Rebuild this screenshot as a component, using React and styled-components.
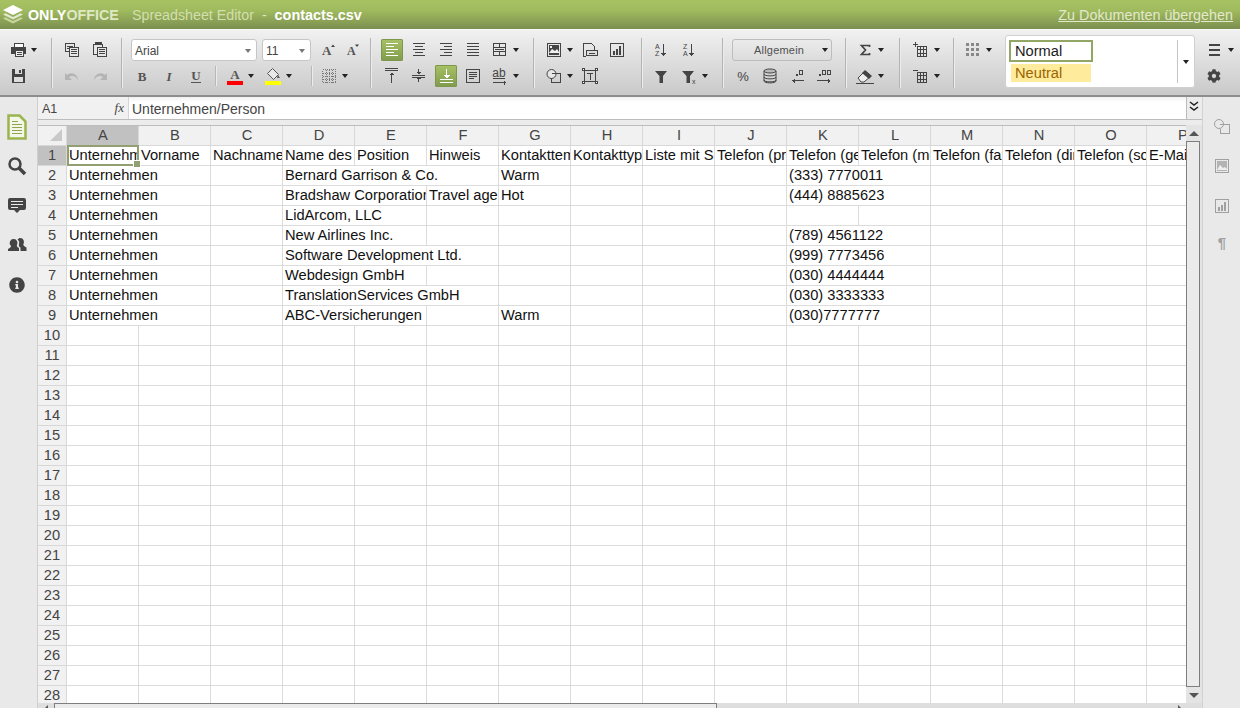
import React from "react";
import styled, { createGlobalStyle } from "styled-components";
import { FaCog, FaInfoCircle } from "react-icons/fa";

const Global = createGlobalStyle`
  html, body { margin: 0; padding: 0; background: #fff; }
  body { font-family: "Liberation Sans", Arial, sans-serif; overflow: hidden; }
  * { box-sizing: border-box; }
`;

const Page = styled.div`
  width: 1240px; height: 708px; overflow: hidden;
  display: flex; flex-direction: column;
`;
const Header = styled.header`
  height: 29px; flex: none; display: flex; align-items: center;
  padding: 0 7px 0 3px; color: #fff;
  background: linear-gradient(#a6c262, #a0bb5e 35%, #7c8f50);
`;
const LogoText = styled.span`
  font-size: 14.3px; font-weight: 700; margin-left: 5px; width: 104px; color: #dfe8c4;
  b { color: #fff; }
`;
const AppName = styled.span`
  font-size: 14.25px; color: #d3dfae;
  &::after { content: "  -  "; white-space: pre; color: #dfe8c4; }
`;
const FileName = styled.span`font-size: 14.4px; font-weight: 700; color: #fff;`;
const DocLink = styled.a`
  margin-left: auto; font-size: 14.35px; color: #e2e9cb; text-decoration: underline;
`;

const Toolbar = styled.div`
  height: 68px; flex: none; display: flex; align-items: flex-start; padding-top: 9px;
  background: linear-gradient(#f1f1f1, #c9c9c9);
  border-top: 1px solid #fafafa; border-bottom: 2px solid #8d8d8d;
`;
const Group = styled.div`
  width: ${p => p.$w}px; padding-left: ${p => p.$pad}px; flex: none;
  display: flex; flex-direction: column; gap: 4px;
`;
const GroupSep = styled.div`
  width: 1px; height: 50px; flex: none; background: #b4b4b4; box-shadow: 1px 0 0 #ececec; margin-top: -1px;
`;
const ToolRow = styled.div`
  display: flex; align-items: center; gap: ${p => p.$gap ?? 5}px; height: 22px;
`;
const RowSep = styled.div`
  width: 1px; height: 20px; background: #b8b8b8; box-shadow: 1px 0 0 #ececec;
  margin: 0 ${p => p.$r}px 0 ${p => p.$l}px;
`;
const ToolButton = styled.div`
  width: ${p => p.$w}px; height: 22px; flex: none; display: flex; align-items: center; border-radius: 2px;
  color: #444;
  ${p => p.$active ? "background: linear-gradient(#a8c266, #7f9a4c); box-shadow: inset 0 0 0 1px #7d974b; color: #fff;" : ""}
`;
const GearSlot = styled.span`
  display: flex; width: 22px; justify-content: center; padding-right: 2px;
`;
const Caret = styled.i`
  display: block; width: 0; height: 0; margin-left: 2px; flex: none;
  border-left: 3.5px solid transparent; border-right: 3.5px solid transparent;
  border-top: 4px solid ${p => p.$color || "#222"};
`;
const Svg = styled.svg`
  flex: none; display: block; fill: none; stroke: currentColor;
`;
const LogoMark = styled(Svg)`stroke: none;`;
const IconText = styled.text`
  font-family: ${p => (p.$serif ? '"Liberation Serif"' : '"Liberation Sans"')}, serif;
  font-size: ${p => p.$size}px; font-weight: ${p => (p.$bold ? 700 : 400)};
  font-style: ${p => (p.$italic ? "italic" : "normal")};
  fill: ${p => p.$fill || "currentColor"}; stroke: none;
`;
const Combo = styled.div`
  width: ${p => p.$w}px; height: 22px; flex: none; display: flex; align-items: center; justify-content: space-between;
  padding: 1px 5px 0 3px; background: #fff; border: 1px solid #c6c6c6; border-radius: 3px;
  font-size: 12px; color: #444;
`;
const FormatCombo = styled.div`
  width: 100px; height: 22px; flex: none; display: flex; align-items: center; padding: 0 3px 0 21px;
  justify-content: space-between; border: 1px solid #bdbdbd; border-radius: 3px;
  background: linear-gradient(#ebebeb, #dcdcdc);
  font-size: 11px; letter-spacing: .2px; color: #505050;
`;
const Gallery = styled.div`
  width: 190px; height: 53px; margin-top: -4px; flex: none; display: flex; background: #fff;
  border: 1px solid #d0d0d0; border-radius: 3px;
`;
const StyleList = styled.div`
  flex: 1; padding: 4px 0 0 3px; display: flex; flex-direction: column; gap: 2px;
`;
const StyleNormal = styled.div`
  width: 84px; height: 22px; border: 2px solid #93a665; padding-left: 4px;
  font-size: 14.67px; line-height: 18px; color: #1c1c1c;
`;
const StyleNeutral = styled.div`
  width: 80px; height: 18px; margin-left: 2px; background: #ffeb9c; padding-left: 4px;
  font-size: 14.67px; line-height: 18px; color: #9c6500;
`;
const GalleryEdge = styled.div`
  width: 17px; margin: 4px 0; flex: none; border-left: 1px solid #c4c4c4;
  display: flex; align-items: center; justify-content: center; padding-right: 2px;
`;

const Workspace = styled.div`flex: 1; display: flex; min-height: 0;`;
const SideBar = styled.aside`
  width: ${p => p.$w}px; flex: none; background: #e9e9e9; padding-top: 10px;
  ${p => (p.$right ? "border-left: 1px solid #d2d2d2;" : "border-right: 1px solid #cfcfcf;")}
  color: ${p => (p.$right ? "#a0a0a0" : "#444")};
`;
const SideItem = styled.div`
  height: 39.5px; display: flex; align-items: center; justify-content: center;
  padding-left: ${p => (p.$right ? 1 : 0)}px; padding-right: ${p => (p.$right ? 0 : 3)}px;
`;
const Main = styled.main`flex: 1; min-width: 0; display: flex; flex-direction: column;`;
const FormulaBar = styled.div`
  height: 23px; flex: none; display: flex; border-bottom: 1px solid #bcbcbc;
`;
const NameBox = styled.div`
  width: 90px; flex: none; display: flex; align-items: center; justify-content: space-between;
  padding: 2px 4px 0 4px; background: #f1f1f1; font-size: 12.5px; color: #444;
`;
const FxLabel = styled.span`
  font-family: "Liberation Serif", serif; font-style: italic; font-size: 13px; color: #444; margin-top: -2px;
`;
const FormulaInput = styled.div`
  flex: 1; padding-left: 3px; font-size: 14px; line-height: 24px; color: #444;
  background: linear-gradient(#f0f0f0, #fff 5px); border-left: 1px solid #d5d5d5;
`;
const ExpandButton = styled.div`
  width: 16px; flex: none; background: #ececec; border-left: 1px solid #bcbcbc;
  display: flex; justify-content: center; padding: 4px 2px 0 0; color: #222;
`;
const Strip = styled.div`height: 5px; flex: none; background: #ececec;`;
const SheetArea = styled.div`flex: 1; min-height: 0; display: flex;`;
const Sheet = styled.div`flex: 1; min-width: 0; overflow: hidden; position: relative; background: #fff;`;
const Row = styled.div`
  display: grid; grid-template-columns: 29px repeat(16, 72px); width: 1181px; height: 20px;
`;
const HeaderRow = styled(Row)`height: 21px; border-top: 1px solid #bdbdbd;`;
const Corner = styled.div`
  background: #f1f1f1; border-right: 1px solid #d8d8d8; border-bottom: 1px solid #d8d8d8;
  display: flex; align-items: flex-end; justify-content: flex-end; padding: 0 3px 3px 0;
`;
const HeadCell = styled.div`
  background: ${p => (p.$selected ? "#c1c1c1" : "#f1f1f1")};
  border-right: 1px solid #d8d8d8; border-bottom: 1px solid #d8d8d8;
  font-size: 14.67px; color: #444; text-align: center; line-height: 19px;
`;
const ColHead = styled(HeadCell)`padding-left: 1px;`;
const Cell = styled.div`
  grid-column: span ${p => p.$span};
  border-right: 1px solid #dcdcdc; border-bottom: 1px solid #dcdcdc;
  padding-left: 2px; font-size: 14.67px; line-height: 19px; color: #111;
  white-space: nowrap; overflow: hidden;
`;
const Selection = styled.div`
  position: absolute; left: 29px; top: 20px; width: 72px; height: 21px;
  border: 2px solid #929f70; pointer-events: none;
  &::after {
    content: ""; position: absolute; right: -4px; bottom: -4px; width: 6px; height: 6px;
    background: #929f70; border: 1px solid #fff;
  }
`;
const VScroll = styled.div`
  width: 16px; flex: none; display: flex; flex-direction: column; align-items: stretch; background: #e4e4e4;
`;
const ArrowCell = styled.div`
  height: ${p => p.$h}px; flex: none; display: flex; align-items: center; justify-content: center; padding-right: 1px;
`;
const UpTri = styled.i`
  width: 0; height: 0; border-left: 5px solid transparent; border-right: 5px solid transparent;
  border-bottom: 5px solid #555;
`;
const DownTri = styled(UpTri)`border-bottom: 0; border-top: 5px solid #555;`;
const VThumb = styled.div`
  flex: 1; width: 14px; border: 1px solid #7e7e7e; background: #ebebeb;
`;
const HScroll = styled.div`
  height: 5px; flex: none; display: flex; background: #dedede;
`;
const HArrow = styled.div`
  width: ${p => p.$w}px; flex: none; display: flex; justify-content: flex-end; padding: 2px ${p => p.$inset}px 0 0;
`;
const Tip = styled.i`
  width: 0; height: 0; border-top: 3px solid transparent; border-bottom: 3px solid transparent;
  ${p => (p.$flip ? "border-left: 3px solid #555;" : "border-right: 3px solid #555;")}
`;
const HThumb = styled.div`
  width: 663px; flex: none; border: 1px solid #7e7e7e; border-bottom: 0; background: #ebebeb;
`;

const G = ({ children, w = 22, h = 22 }) => (
  <Svg width={w} height={h} viewBox={`0 0 ${w} ${h}`}>{children}</Svg>
);
const C = { shapeRendering: "crispEdges" };
const lines = (rows) => <path style={C} d={rows.map(([x, y, l]) => `M${x} ${y + 0.5}h${l}`).join("")} />;

const icons = {
  print: <G><g style={C}><path fill="#fff" d="M7.5 4.5h9v4h-9z" /><path fill="currentColor" d="M4 8h15v7H4z" stroke="none" /><path fill="#eee" d="M8.5 11.5h8v6h-8z" /><path d="M10 13.5h5M10 15.5h5" /></g></G>,
  save: <G><g style={C}><path fill="currentColor" stroke="none" d="M5 4h12l1 1v13H5z" /><path fill="#ddd" stroke="none" d="M8 4h7v5H8zM7 12h9v5H7z" /><path fill="currentColor" stroke="none" d="M12 5h2v3h-2z" /></g></G>,
  copy: <G><g style={C}><path d="M4.5 4.5h9v8h-9z" fill="#e6e6e6" /><path d="M6 7.5h6M6 9.5h6" /><path d="M8.5 8.5h9v9h-9z" fill="#e6e6e6" /><path d="M10 10.5h6M10 12.5h6M10 14.5h6" /></g></G>,
  paste: <G><g style={C}><path d="M4.5 5.5h9v10h-9z" fill="#e6e6e6" /><path fill="currentColor" stroke="none" d="M6 3h7v3H6z" /><path d="M8.5 8.5h9v9h-9z" fill="#e6e6e6" /><path d="M10 10.5h6M10 12.5h6M10 14.5h6" /></g></G>,
  undo: <G><path fill="#b4b4b4" stroke="none" d="M4 8v7h7l-3-3c3-2 7-1 9 3 0-5-6-9-11-5z" /></G>,
  redo: <G><path fill="#b4b4b4" stroke="none" d="M18 8v7h-7l3-3c-3-2-7-1-9 3 0-5 6-9 11-5z" /></G>,
  grow: <G><IconText x="6" y="16" $serif $bold $size={13} $fill="#555">A</IconText><path fill="currentColor" stroke="none" d="M15 8l2-2.500 2 2.500z" /></G>,
  shrink: <G><IconText x="4" y="16" $serif $bold $size={12} $fill="#555">A</IconText><path fill="currentColor" stroke="none" d="M12 5.500h4l-2 2.500z" /></G>,
  bold: <G><IconText x="11" y="16" textAnchor="middle" $serif $bold $size={13} $fill="#555">B</IconText></G>,
  italic: <G><IconText x="11" y="16" textAnchor="middle" $serif $bold $italic $size={13} $fill="#555">I</IconText></G>,
  underline: <G><IconText x="11" y="15" textAnchor="middle" $serif $bold $size={13} $fill="#555">U</IconText><path style={C} stroke="#555" d="M6 17.500h10" /></G>,
  fontColor: <G><IconText x="11" y="14" textAnchor="middle" $serif $bold $size={13} $fill="#555">A</IconText><path style={C} fill="#f00" stroke="none" d="M3 16h16v4H3z" /></G>,
  fillColor: <G><path stroke="#555" d="M10.500 3.500l6 6-5 5-6-6z" fill="#e8e8e8" /><path fill="#555" stroke="none" d="M16 10l2 3h-3z" /><path style={C} fill="#ff0" stroke="none" d="M3 16h16v4H3z" /></G>,
  borders: <G><path style={C} stroke="#777" strokeDasharray="1 1" d="M4.500 4.500h13v13h-13zM11 4.500v13M4.500 11h13M8 4.500v13M14 4.500v13M4.500 8h13M4.500 14h13" /></G>,
  alignL: <G>{lines([[5, 4, 12], [5, 7, 8], [5, 10, 12], [5, 13, 8], [5, 16, 12]])}</G>,
  alignC: <G>{lines([[5, 4, 12], [7, 7, 8], [5, 10, 12], [7, 13, 8], [5, 16, 12]])}</G>,
  alignR: <G>{lines([[5, 4, 12], [9, 7, 8], [5, 10, 12], [9, 13, 8], [5, 16, 12]])}</G>,
  alignJ: <G>{lines([[5, 4, 12], [5, 7, 12], [5, 10, 12], [5, 13, 12], [5, 16, 12]])}</G>,
  merge: <G><g style={C}><path d="M4.500 4.500h12v12h-12zM4.500 8.500h12M4.500 12.500h12M10.500 4.500v4M10.500 12.500v4" /><path d="M6 10.500h9" /></g></G>,
  vTop: <G>{lines([[4, 3, 13], [4, 5, 13]])}<path style={C} d="M10.500 18V8M8.500 9.500h4M9.500 8.500h2" /></G>,
  vMid: <G>{lines([[4, 10, 13]])}<path style={C} d="M10.500 4v4M10.500 13v4M8.500 7.500h4M9.500 8.500h2M8.500 13.500h4M9.500 12.500h2M4 12.500h13" /></G>,
  vBot: <G><path style={C} d="M11.500 4v8M8.500 10.500h6M9.500 11.500h4M10.500 12.500h2M5 14.500h13M5 17.500h13" /></G>,
  wrap: <G><path style={C} d="M4.500 4.500h13v13h-13z" />{lines([[7, 7, 8], [7, 9, 8], [7, 11, 8], [7, 13, 5]])}</G>,
  orient: <G><IconText x="10" y="12" textAnchor="middle" $size={12}>ab</IconText><path style={C} d="M4 13.500h12M4 17.500h13M15.500 15.500v4" /></G>,
  image: <G><g style={C}><path d="M4.500 4.500h13v13h-13z" /><path fill="currentColor" stroke="none" d="M6 6h10v10H6z" /></g><path fill="#eee" stroke="none" d="M6 14l3-4 3 2 2-2 2 3v1H6z" /><path fill="#eee" stroke="none" d="M7 7h2v2H7z" /></G>,
  link: <G><path style={C} d="M4.500 17.500V4.500h8l3 3v3M4.500 17.500h2" /><path style={C} d="M7.500 11.500h11v5h-11z" fill="#ddd" /><path style={C} d="M10 14h6" /></G>,
  chart: <G><g style={C}><path d="M4.500 4.500h13v13h-13z" /><path d="M7.500 12.500h1v3h-1zM10.500 10.500h1v5h-1zM13.500 7.500h1v8h-1z" /></g></G>,
  shape: <G><circle cx="8.500" cy="9" r="4.500" fill="#e6e6e6" /><path style={C} d="M8.500 8.500h9v9h-9V13" /></G>,
  textbox: <G><g style={C}><path d="M5.500 5.500h11v11h-11z" /><path fill="#fff" d="M3.500 3.500h2v2h-2zM16.500 3.500h2v2h-2zM3.500 16.500h2v2h-2zM16.500 16.500h2v2h-2z" /><path d="M8 8.500h6M11 8.500v6" /></g></G>,
  sortAZ: <G><IconText x="5" y="10" $size={7}>A</IconText><IconText x="5" y="16.500" $size={7}>Z</IconText><path style={C} d="M13.500 5v12M11 14.500h5M12 15.500h3M13 16.500h1" /></G>,
  sortZA: <G><IconText x="5" y="10" $size={7}>Z</IconText><IconText x="5" y="16.500" $size={7}>A</IconText><path style={C} d="M13.500 5v12M11 14.500h5M12 15.500h3M13 16.500h1" /></G>,
  filter: <G><path fill="currentColor" stroke="none" d="M5 6h12l-4 5v7H9.500v-7z" /></G>,
  clearFilter: <G><path fill="currentColor" stroke="none" d="M4 6h12l-4 5v7H8.500v-7z" /><IconText x="14" y="19" $size={7}>x</IconText></G>,
  percent: <G><IconText x="11" y="16" textAnchor="middle" $size={13}>%</IconText></G>,
  db: <G><ellipse cx="11" cy="6" rx="6" ry="2" fill="#bbb" /><path d="M5 6v10c0 2.500 12 2.500 12 0V6M5 9c0 2.500 12 2.500 12 0M5 12c0 2.500 12 2.500 12 0M5 15c0 2.500 12 2.500 12 0" /></G>,
  dec: <G><path style={C} d="M18 15.500H6M8 13.500v4M7 14.500v2" /><path style={C} d="M13.500 5.500h3v4h-3z" /><path style={C} d="M10 9h1v1h-1z" fill="currentColor" /></G>,
  inc: <G><path style={C} d="M4 15.500h13M15 13.500v4M16 14.500v2" /><path style={C} d="M9.500 5.500h3v4h-3zM14.500 5.500h3v4h-3z" /><path style={C} d="M6 9h1v1H6z" fill="currentColor" /></G>,
  sum: <G><path d="M15.500 8V6.500H7.500L11.500 11L7.500 15.500H15.500V14" strokeWidth="1.700" /></G>,
  eraser: <G><path d="M4 13l7-7 6 5-7 6H7z" fill="#eee" /><path fill="currentColor" stroke="none" d="M11 5l7 6-3 3-7-6z" /><path style={C} d="M2 18.500h18" /></G>,
  insert: <G><path style={C} d="M7.500 7.500h9v10h-9zM7.500 10.500h9M7.500 14.500h9M10.500 7.500v10M13.500 7.500v10" /><path style={C} d="M3 5.500h5M5.500 3v5" /></G>,
  remove: <G><path style={C} d="M7.500 7.500h9v10h-9zM7.500 10.500h9M7.500 14.500h9M10.500 7.500v10M13.500 7.500v10" /><path style={C} d="M3 5.500h5" /></G>,
  dots: <G><path style={C} fill="#888" stroke="none" d="M4 4h3v3H4zM9 4h3v3H9zM14 4h3v3h-3zM4 9h3v3H4zM9 9h3v3H9zM14 9h3v3h-3zM4 14h3v3H4zM9 14h3v3H9zM14 14h3v3h-3z" /></G>,
  menu: <G><path style={C} fill="currentColor" stroke="none" d="M5 5h11v2H5zM5 10h11v2H5zM5 15h11v2H5z" /></G>,
  gear: <GearSlot><FaCog size={14} /></GearSlot>,
  doc: <G w={20} h={26}><path d="M1.500 1.500h11l6 6v17h-17z" fill="#f4f7e8" stroke="#9ab44f" strokeWidth="2.500" /><path style={C} stroke="#8fa650" d="M5 7.500h6M5 10.500h10M5 13.500h10M5 16.500h10M5 19.500h10" /></G>,
  search: <G w={20} h={20}><circle cx="8" cy="8" r="5.500" strokeWidth="2.500" /><path d="M12 12l6 6" strokeWidth="3.500" /></G>,
  chat: <G w={20} h={20}><path fill="currentColor" stroke="none" d="M3 2h14q2 0 2 2v8q0 2-2 2h-4l-3 3-3-3H3q-2 0-2-2V4q0-2 2-2z" /><path style={C} stroke="#e9e9e9" d="M4 5.500h12M4 8.500h12M4 11.500h7" /></G>,
  users: <G w={20} h={20}><path fill="currentColor" stroke="none" d="M7 4a3.500 4 0 0 1 3 6c-.5 1 0 2 2 3v3H1v-2c2-1 3-2 3-3a4 4 0 0 1 3-7zM13.500 3a3.500 4 0 0 1 3 6c-.5 1 0 2 3 3.500V16h-6v-3.500c-1.500-.5-2-2-1.500-3.500a4 4 0 0 0-1.500-4.500c.8-.8 1.800-1.500 2.800-1.500z" /></G>,
  info: <FaInfoCircle size={16} />,
  rShape: <G w={18} h={18}><circle cx="6" cy="6" r="4.500" fill="#e9e9e9" /><path style={C} d="M6.500 6.500h10v9h-9V11" /></G>,
  rImage: <G w={16} h={16}><path style={C} d="M1.500 1.500h13v13h-13z" /><path fill="currentColor" stroke="none" d="M3 3h10v10H3z" opacity=".75" /><path fill="#eee" stroke="none" d="M3 12l3-5 3 3 2-1 2 2v1H3z" /></G>,
  rChart: <G w={16} h={16}><g style={C}><path d="M1.500 1.500h13v13h-13z" /><path d="M4.500 9.500h1v3h-1zM7.500 7.500h1v5h-1zM10.500 4.500h1v8h-1z" /></g></G>,
  rPara: <G w={14} h={16}><IconText x="7" y="11" textAnchor="middle" $size={15} $bold>¶</IconText></G>,
  chevrons: <G w={10} h={11}><path stroke="#222" strokeWidth="1.500" d="M1 1l4 3 4-3M1 6l4 3 4-3" /></G>,
  tri: <G w={14} h={14}><path fill="#c9c9c9" stroke="none" d="M13 1v12H1z" /></G>,
};

const Tool = ({ name, arrow, active, w }) => (
  <ToolButton $active={active} $w={w || (arrow ? 31 : 22)}>
    {icons[name]}
    {arrow && <Caret />}
  </ToolButton>
);

const letters = "ABCDEFGHIJKLMNOP".split("");
const headRow = [
  "Unternehmen/Person", "Vorname", "Nachname", "Name des Unternehmens", "Position", "Hinweis",
  "Kontakttemperatur", "Kontakttyp", "Liste mit Schlüsselwörtern", "Telefon (privat)",
  "Telefon (geschäftlich)", "Telefon (mobil)", "Telefon (fax)", "Telefon (direkt)", "Telefon (sonstige)", "E-Mail",
];
const sparse = {
  2: [[0, 2, "Unternehmen"], [3, 3, "Bernard Garrison & Co."], [6, 1, "Warm"], [10, 2, "(333) 7770011"]],
  3: [[0, 2, "Unternehmen"], [3, 2, "Bradshaw Corporation"], [5, 1, "Travel agency"], [6, 1, "Hot"], [10, 2, "(444) 8885623"]],
  4: [[0, 2, "Unternehmen"], [3, 2, "LidArcom, LLC"]],
  5: [[0, 2, "Unternehmen"], [3, 2, "New Airlines Inc."], [10, 2, "(789) 4561122"]],
  6: [[0, 2, "Unternehmen"], [3, 3, "Software Development Ltd."], [10, 2, "(999) 7773456"]],
  7: [[0, 2, "Unternehmen"], [3, 2, "Webdesign GmbH"], [10, 2, "(030) 4444444"]],
  8: [[0, 2, "Unternehmen"], [3, 3, "TranslationServices GmbH"], [10, 2, "(030) 3333333"]],
  9: [[0, 2, "Unternehmen"], [3, 2, "ABC-Versicherungen"], [6, 1, "Warm"], [10, 2, "(030)7777777"]],
};
const buildCells = (n) => {
  if (n === 1) return headRow.map((t) => [1, t]);
  const out = [];
  const items = sparse[n] || [];
  for (let c = 0; c < 16; ) {
    const it = items.find((i) => i[0] === c);
    if (it) { out.push([it[1], it[2]]); c += it[1]; } else { out.push([1, ""]); c += 1; }
  }
  return out;
};
const rows = Array.from({ length: 28 }, (_, i) => i + 1);

export default function App() {
  return (
    <Page>
      <Global />
      <Header>
        <LogoMark width="20" height="19" viewBox="0 0 20 19">
          <path fill="#c6d59c" d="M0 13.500l2.500-1.200L10 16l7.500-3.700 2.500 1.200-10 5z" />
          <path fill="#e2ead0" d="M0 9.500l2.500-1.200L10 12l7.500-3.700L20 9.500l-10 5z" />
          <path fill="#fff" d="M10 0l10 5-10 5L0 5z" />
        </LogoMark>
        <LogoText><b>ONLY</b>OFFICE</LogoText>
        <AppName>Spreadsheet Editor</AppName>
        <FileName>contacts.csv</FileName>
        <DocLink>Zu Dokumenten übergehen</DocLink>
      </Header>
      <Toolbar>
        <Group $w={51} $pad={7}>
          <ToolRow><Tool name="print" arrow /></ToolRow>
          <ToolRow><Tool name="save" /></ToolRow>
        </Group>
        <GroupSep />
        <Group $w={69} $pad={9}>
          <ToolRow $gap={6}><Tool name="copy" /><Tool name="paste" /></ToolRow>
          <ToolRow $gap={6}><Tool name="undo" /><Tool name="redo" /></ToolRow>
        </Group>
        <GroupSep />
        <Group $w={248} $pad={9}>
          <ToolRow>
            <Combo $w={126}>Arial<Caret $color="#777" /></Combo>
            <Combo $w={49}>11<Caret $color="#777" /></Combo>
            <Tool name="grow" />
            <Tool name="shrink" w={24} />
          </ToolRow>
          <ToolRow>
            <Tool name="bold" />
            <Tool name="italic" />
            <Tool name="underline" />
            <RowSep $l={3} $r={3} />
            <Tool name="fontColor" arrow w={33} />
            <Tool name="fillColor" arrow w={33} />
            <RowSep $l={11} $r={1} />
            <Tool name="borders" arrow w={33} />
          </ToolRow>
        </Group>
        <GroupSep />
        <Group $w={162} $pad={10}>
          <ToolRow>
            <Tool name="alignL" active />
            <Tool name="alignC" />
            <Tool name="alignR" />
            <Tool name="alignJ" />
            <Tool name="merge" arrow />
          </ToolRow>
          <ToolRow>
            <Tool name="vTop" />
            <Tool name="vMid" />
            <Tool name="vBot" active />
            <Tool name="wrap" />
            <Tool name="orient" arrow />
          </ToolRow>
        </Group>
        <GroupSep />
        <Group $w={107} $pad={9}>
          <ToolRow><Tool name="image" arrow /><Tool name="link" /><Tool name="chart" /></ToolRow>
          <ToolRow><Tool name="shape" arrow /><Tool name="textbox" /></ToolRow>
        </Group>
        <GroupSep />
        <Group $w={80} $pad={8}>
          <ToolRow $gap={6}><Tool name="sortAZ" /><Tool name="sortZA" /></ToolRow>
          <ToolRow $gap={6}><Tool name="filter" /><Tool name="clearFilter" arrow /></ToolRow>
        </Group>
        <GroupSep />
        <Group $w={122} $pad={9}>
          <ToolRow><FormatCombo>Allgemein<Caret /></FormatCombo></ToolRow>
          <ToolRow>
            <Tool name="percent" /><Tool name="db" /><Tool name="dec" /><Tool name="inc" />
          </ToolRow>
        </Group>
        <GroupSep />
        <Group $w={53} $pad={8}>
          <ToolRow><Tool name="sum" arrow /></ToolRow>
          <ToolRow><Tool name="eraser" arrow /></ToolRow>
        </Group>
        <GroupSep />
        <Group $w={53} $pad={10}>
          <ToolRow><Tool name="insert" arrow /></ToolRow>
          <ToolRow><Tool name="remove" arrow /></ToolRow>
        </Group>
        <GroupSep />
        <Group $w={51} $pad={8}>
          <ToolRow><Tool name="dots" arrow /></ToolRow>
        </Group>
        <Gallery>
          <StyleList>
            <StyleNormal>Normal</StyleNormal>
            <StyleNeutral>Neutral</StyleNeutral>
          </StyleList>
          <GalleryEdge><Caret /></GalleryEdge>
        </Gallery>
        <Group $w={45} $pad={9}>
          <ToolRow><Tool name="menu" arrow /></ToolRow>
          <ToolRow><Tool name="gear" /></ToolRow>
        </Group>
      </Toolbar>
      <Workspace>
        <SideBar $w={38}>
          {["doc", "search", "chat", "users", "info"].map((n) => <SideItem key={n}>{icons[n]}</SideItem>)}
        </SideBar>
        <Main>
          <FormulaBar>
            <NameBox>A1<FxLabel>fx</FxLabel></NameBox>
            <FormulaInput>Unternehmen/Person</FormulaInput>
            <ExpandButton>{icons.chevrons}</ExpandButton>
          </FormulaBar>
          <Strip />
          <SheetArea>
            <Sheet>
              <HeaderRow>
                <Corner>{icons.tri}</Corner>
                {letters.map((l, i) => <ColHead key={l} $selected={i === 0}>{l}</ColHead>)}
              </HeaderRow>
              {rows.map((n) => (
                <Row key={n}>
                  <HeadCell $selected={n === 1}>{n}</HeadCell>
                  {buildCells(n).map(([span, text], i) => <Cell key={i} $span={span}>{text}</Cell>)}
                </Row>
              ))}
              <Selection />
            </Sheet>
            <VScroll>
              <ArrowCell $h={16}><UpTri /></ArrowCell>
              <VThumb />
              <ArrowCell $h={16}><DownTri /></ArrowCell>
            </VScroll>
          </SheetArea>
          <HScroll>
            <HArrow $w={16} $inset={6}><Tip /></HArrow>
            <HThumb />
            <HArrow $w={469} $inset={5}><Tip $flip /></HArrow>
          </HScroll>
        </Main>
        <SideBar $w={38} $right>
          {["rShape", "rImage", "rChart", "rPara"].map((n) => <SideItem key={n} $right>{icons[n]}</SideItem>)}
        </SideBar>
      </Workspace>
    </Page>
  );
}
